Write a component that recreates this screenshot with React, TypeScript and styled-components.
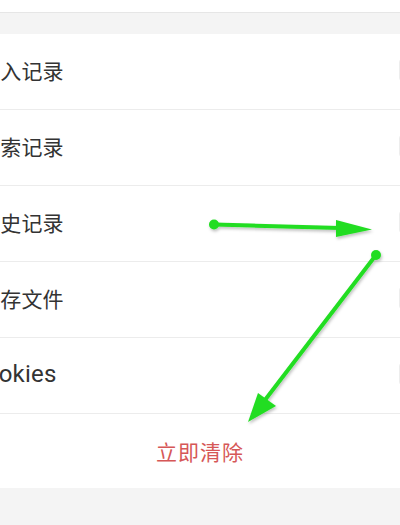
import React from 'react'
import styled, { createGlobalStyle } from 'styled-components'

const GlobalStyle = createGlobalStyle`
  html, body {
    margin: 0;
    padding: 0;
    background: #ffffff;
    overflow: hidden;
  }
  body {
    font-family: Roboto, "Noto Sans CJK SC", "Noto Sans", sans-serif;
  }
`

const Page = styled.div`
  position: relative;
  width: 400px;
  height: 525px;
  overflow: hidden;
  background: #f4f4f4;
`

const TopStrip = styled.div`
  height: 12px;
  background: #ffffff;
  border-bottom: 1px solid #e6e6e6;
`

const Spacer = styled.div`
  height: 21px;
`

// the screenshot is cropped: both ends of each row run past the edges
const List = styled.div`
  background: #ffffff;
  margin-left: -21px;
  margin-right: -21px;
`

const Row = styled.div`
  height: 76px;
  padding-bottom: 4px;
  box-sizing: border-box;
  display: flex;
  align-items: center;
  justify-content: space-between;
  border-bottom: 1px solid #ececec;
`

const Label = styled.span<{ $latin?: boolean }>`
  font-size: ${(p) => (p.$latin ? '24px' : '21px')};
  margin-left: ${(p) => (p.$latin ? '-10px' : '0')};
  color: #333333;
  letter-spacing: 0.2px;
`

const Check = styled.span`
  width: 20px;
  height: 20px;
  border: 1px solid #ededed;
  border-radius: 3px;
`

const ClearButton = styled.div`
  height: 74px;
  display: flex;
  align-items: center;
  justify-content: center;
  font-size: 21px;
  color: #d65757;
  letter-spacing: 1px;
`

const Annotation = styled.svg`
  position: absolute;
  left: 0;
  top: 0;
  pointer-events: none;
`

const items = ['输入记录', '搜索记录', '历史记录', '缓存文件', 'Cookies']

export default function App() {
  return (
    <>
      <GlobalStyle />
      <Page>
        <TopStrip />
        <Spacer />
        <List>
          {items.map((item) => (
            <Row key={item}>
              <Label $latin={/^[A-Za-z]/.test(item)}>{item}</Label>
              <Check />
            </Row>
          ))}
          <ClearButton>立即清除</ClearButton>
        </List>
        <Annotation width="400" height="525" viewBox="0 0 400 525">
          <defs>
            <filter id="shade" x="-20%" y="-20%" width="140%" height="140%">
              <feDropShadow dx="1" dy="2" stdDeviation="1.5" floodColor="#000" floodOpacity="0.25" />
            </filter>
          </defs>
          <g filter="url(#shade)" fill="#22dd22" stroke="#22dd22">
            <line x1="214" y1="224.5" x2="340" y2="228" strokeWidth="4" strokeLinecap="round" />
            <circle cx="214" cy="224.5" r="5" stroke="none" />
            <polygon points="336,220 372,229.5 336,237" stroke="none" />
            <line x1="376" y1="255" x2="265" y2="400" strokeWidth="4" strokeLinecap="round" />
            <circle cx="376" cy="255" r="5" stroke="none" />
            <polygon points="258,393 276,406 248,422" stroke="none" />
          </g>
        </Annotation>
      </Page>
    </>
  )
}
